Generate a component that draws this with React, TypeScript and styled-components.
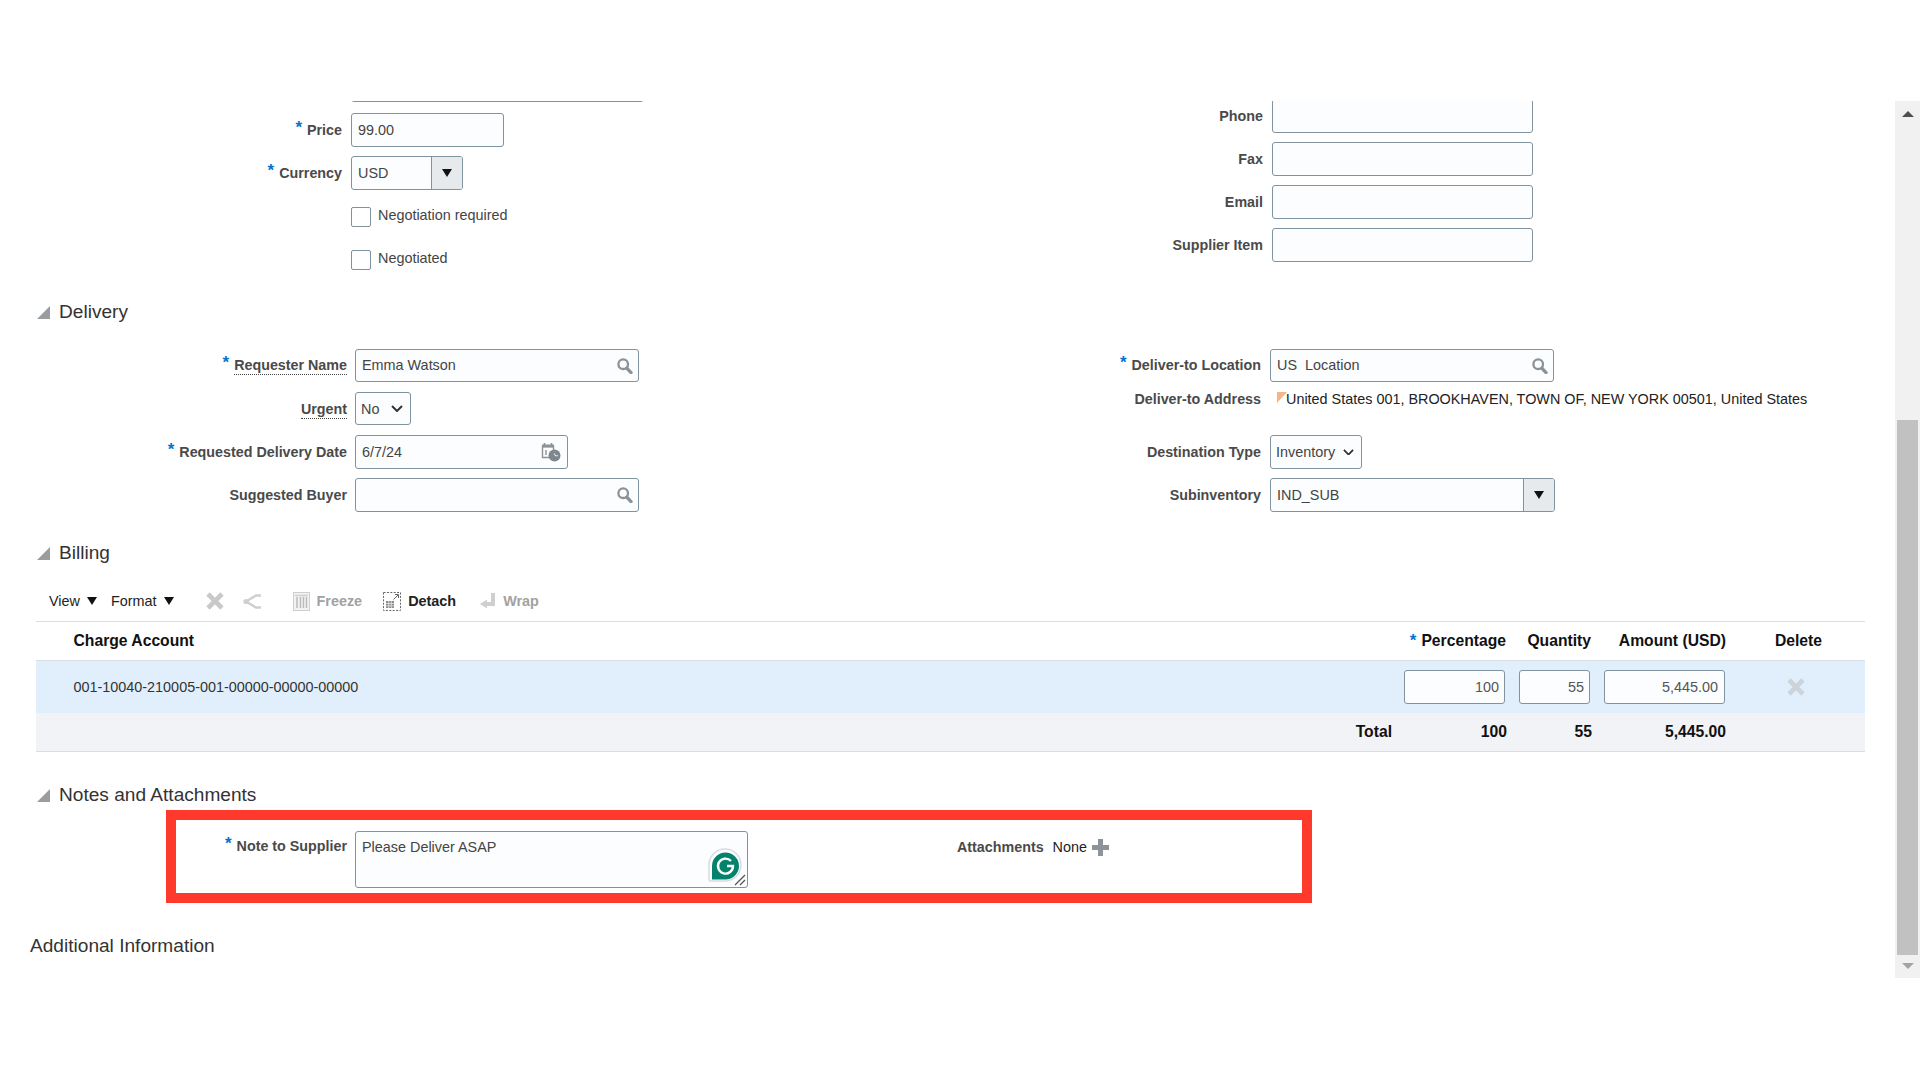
import * as React from 'react';
import styled, { createGlobalStyle } from 'styled-components';

const GlobalStyle = createGlobalStyle`
  html, body {
    margin: 0;
    padding: 0;
    background: #fff;
  }
  body {
    font-family: "Liberation Sans", Arial, sans-serif;
    font-size: 14.4px;
    color: #333;
  }
`;

const Page = styled.div`
  height: 1080px;
  overflow: hidden;
  padding-top: 101px;
  box-sizing: border-box;
`;

const Viewport = styled.div`
  display: flex;
  height: 877px;
`;

const Content = styled.main`
  flex: 1;
  min-width: 0;
  overflow: hidden;
`;

const Scrollbar = styled.div`
  width: 25px;
  background: #f1f1f1;
  display: flex;
  flex-direction: column;
  align-items: center;
`;

const ScrollArrow = styled.div<{ $down?: boolean }>`
  width: 0;
  height: 0;
  border-left: 6px solid transparent;
  border-right: 6px solid transparent;
  ${p => (p.$down ? 'border-top: 6px solid #a3a3a3; margin-top: 8px;' : 'border-bottom: 6px solid #505050; margin-top: 10px;')}
`;

const ScrollThumb = styled.div`
  width: 21px;
  height: 535px;
  margin-top: 303px;
  background: #c1c1c1;
`;

const Columns = styled.div`
  display: grid;
  grid-template-columns: 1000px 1fr;
  align-items: start;
`;

const FormGrid = styled.div<{ $label: number; $gap?: number; $top?: number }>`
  display: grid;
  grid-template-columns: ${p => p.$label}px 1fr;
  column-gap: ${p => p.$gap ?? 9}px;
  row-gap: 9px;
  grid-auto-rows: 34px;
  align-items: center;
  margin-top: ${p => p.$top ?? 0}px;
`;

const Label = styled.label<{ $start?: boolean; $up?: boolean }>`
  font-size: 14.3px;
  font-weight: 700;
  color: #4a4a4a;
  text-align: right;
  line-height: 15px;
  white-space: nowrap;
  ${p => p.$start && 'align-self: start;'}
  ${p => p.$up && 'padding-bottom: 2px;'}
`;

const Star = styled.span`
  color: #0572ce;
  font-size: 17px;
  line-height: 10px;
  vertical-align: 2px;
  margin-right: 5px;
`;

const Dotted = styled.span`
  border-bottom: 1px dotted #444;
  padding-bottom: 1px;
`;

const Field = styled.div<{ $width: number; $height?: number; $tight?: boolean }>`
  width: ${p => p.$width}px;
  height: ${p => p.$height ?? 34}px;
  box-sizing: border-box;
  display: flex;
  align-items: center;
  justify-self: start;
  align-self: start;
  border: 1px solid #80939f;
  border-radius: 3px;
  background: #fcfdfe;
  color: #444;
  padding-left: ${p => (p.$tight ? 5 : 6)}px;
  position: relative;
  white-space: pre;
  overflow: hidden;
`;

const FieldText = styled.span<{ $up?: boolean }>`
  flex: 1;
  ${p => p.$up && 'padding-bottom: 1px;'}
`;

const FieldIcon = styled.span<{ $right?: number }>`
  display: flex;
  margin-right: ${p => p.$right ?? 5}px;
`;

const DropButton = styled.span`
  width: 31px;
  height: 100%;
  flex: none;
  display: flex;
  align-items: center;
  justify-content: center;
  background: #e7eaed;
  border-left: 1px solid #80939f;
  box-sizing: border-box;
`;

const DownTriangle = styled.span`
  width: 0;
  height: 0;
  flex: none;
  border-left: 5.5px solid transparent;
  border-right: 5.5px solid transparent;
  border-top: 8px solid #111;
`;

const CheckRow = styled.div`
  display: flex;
  align-items: center;
  gap: 7px;
  padding-top: 1px;
`;

const CheckBox = styled.span`
  width: 20px;
  height: 20px;
  box-sizing: border-box;
  border: 1px solid #80939f;
  border-radius: 2px;
  background: #fff;
`;

const CheckText = styled.span`
  color: #444;
  padding-bottom: 3px;
`;

const AddressValue = styled.div`
  align-self: start;
  line-height: 15px;
  color: #222;
  padding-left: 16px;
  position: relative;
  white-space: nowrap;
`;

const NoteFlag = styled.span`
  position: absolute;
  left: 7px;
  top: 0;
  width: 0;
  height: 0;
  border-top: 11px solid #f7b48a;
  border-right: 10px solid transparent;
`;

const SectionHeader = styled.h2<{ $top: number }>`
  display: flex;
  align-items: center;
  gap: 9px;
  height: 24px;
  margin: ${p => p.$top}px 0 0 37px;
  font-size: 19.1px;
  font-weight: 400;
  color: #333;
`;

const Disclosure = styled.span`
  width: 0;
  height: 0;
  border-bottom: 13px solid #9a9da0;
  border-left: 13px solid transparent;
`;

const PlainHeader = styled.h2`
  height: 24px;
  line-height: 24px;
  margin: 31px 0 0 30px;
  font-size: 19.1px;
  font-weight: 400;
  color: #333;
`;

const Toolbar = styled.div`
  display: flex;
  align-items: center;
  height: 41px;
  margin: 16px 30px 0 36px;
  padding-left: 13px;
  box-sizing: border-box;
  border-bottom: 1px solid #d6dfe6;
`;

const MenuItem = styled.span<{ $left?: number }>`
  display: flex;
  align-items: center;
  gap: 7px;
  color: #222;
  margin-left: ${p => p.$left ?? 0}px;
`;

const ToolButton = styled.span<{ $left: number; $disabled?: boolean }>`
  display: flex;
  align-items: center;
  gap: 7px;
  font-weight: 700;
  color: ${p => (p.$disabled ? '#a2a2a2' : '#222')};
  margin-left: ${p => p.$left}px;
`;

const Table = styled.div`
  margin: 0 30px 0 36px;
  display: grid;
  grid-template-columns: 1362px 114px 85px 135px 1fr;
`;

const HeadCell = styled.div<{ $center?: boolean }>`
  height: 38px;
  display: flex;
  align-items: center;
  justify-content: ${p => (p.$center ? 'center' : 'flex-end')};
  padding-right: ${p => (p.$center ? 0 : 6)}px;
  font-size: 15.7px;
  font-weight: 700;
  color: #111;
  border-bottom: 1px solid #d6dfe6;
`;

const AccountHead = styled(HeadCell)`
  justify-content: flex-start;
  padding-left: 37.5px;
`;

const DataCell = styled.div<{ $center?: boolean }>`
  height: 52px;
  display: flex;
  align-items: center;
  justify-content: ${p => (p.$center ? 'center' : 'flex-end')};
  padding-right: ${p => (p.$center ? 6 : 7)}px;
  background: #e1effd;
  color: #333;
`;

const AccountCell = styled(DataCell)`
  justify-content: flex-start;
  padding-left: 37.5px;
`;

const AmountBox = styled.div<{ $width: number; $pad?: number }>`
  width: ${p => p.$width}px;
  height: 34px;
  box-sizing: border-box;
  border: 1px solid #80939f;
  border-radius: 3px;
  background: #fcfdfe;
  color: #555;
  display: flex;
  align-items: center;
  justify-content: flex-end;
  padding-right: ${p => p.$pad ?? 5}px;
`;

const TotalCell = styled.div<{ $right?: number }>`
  height: 38px;
  display: flex;
  align-items: center;
  justify-content: flex-end;
  padding-right: ${p => p.$right ?? 5}px;
  background: #f1f3f7;
  border-bottom: 1px solid #d6dfe6;
  font-size: 15.7px;
  font-weight: 700;
  color: #111;
`;

const Callout = styled.section`
  display: flex;
  align-items: flex-start;
  box-sizing: border-box;
  width: 1146px;
  height: 93px;
  margin: 3px 0 0 166px;
  border: 10px solid #ff3a2d;
  padding-top: 11px;
`;

const NoteLabel = styled(Label)`
  width: 171px;
  flex: none;
  margin-top: 8px;
`;

const NoteArea = styled.div`
  width: 393px;
  height: 57px;
  flex: none;
  box-sizing: border-box;
  margin-left: 8px;
  padding: 8px 6px;
  line-height: 15px;
  border: 1px solid #80939f;
  border-radius: 3px;
  background: #fcfdfe;
  color: #444;
  position: relative;
`;

const GrammarlyBadge = styled.svg`
  position: absolute;
  right: 5px;
  bottom: 4px;
`;

const ResizeGrip = styled.svg`
  position: absolute;
  right: 1px;
  bottom: 1px;
`;

const Attachments = styled.div`
  display: flex;
  align-items: center;
  margin: 8px 0 0 209px;
  line-height: 15px;
`;

const AttachLabel = styled.span`
  font-size: 14.3px;
  font-weight: 700;
  color: #4a4a4a;
  margin-right: 9px;
`;

const AttachNone = styled.span`
  color: #222;
  margin-right: 5px;
`;

const SearchIcon = () => (
  <svg width="16" height="16" viewBox="0 0 16 16">
    <circle cx="6.2" cy="6.2" r="4.8" fill="none" stroke="#8b9298" strokeWidth="2.3" />
    <path d="M9.8 10.2 14 14.6" stroke="#8b9298" strokeWidth="3.4" strokeLinecap="round" />
  </svg>
);

const Chevron = ({ size }: { size: number }) => (
  <svg width={size} height={size / 2 + 1} viewBox="0 0 12 7">
    <path d="M1 1l5 5 5-5" fill="none" stroke="#333" strokeWidth="2" />
  </svg>
);

const CalendarIcon = () => (
  <svg width="20" height="19" viewBox="0 0 20 19">
    <path d="M1.5 3.5h11v11h-11z" fill="#fcfdfe" stroke="#8b9298" strokeWidth="1.4" />
    <path d="M1 1.5h12v3H1z" fill="#8b9298" />
    <path d="M3.5 0v3M10.5 0v3" stroke="#8b9298" strokeWidth="1.6" />
    <path d="M5 7v5" stroke="#8b9298" strokeWidth="1.4" />
    <circle cx="13.5" cy="12.5" r="6" fill="#7f868c" />
    <path d="M13 10.5l1.5 2.2h2.5" fill="none" stroke="#e5e7e9" strokeWidth="1.1" />
  </svg>
);

const DeleteX = ({ color = '#c9c9c9' }: { color?: string }) => (
  <svg width="18" height="18" viewBox="0 0 18 18">
    <path d="M2 2l14 14M16 2 2 16" stroke={color} strokeWidth="4.6" />
  </svg>
);

const ShareIcon = () => (
  <svg width="19" height="17" viewBox="0 0 19 17">
    <path d="M18 2.5H13L3 8.5l10 6h5" fill="none" stroke="#cfcfcf" strokeWidth="2.4" />
    <circle cx="3" cy="8.5" r="2.6" fill="#cfcfcf" />
  </svg>
);

const FreezeIcon = () => (
  <svg width="17" height="19" viewBox="0 0 17 19">
    <rect x=".5" y=".5" width="16" height="18" fill="#f2f2f2" stroke="#cfcfcf" />
    <path d="M2 3.5h13" stroke="#cfcfcf" strokeWidth="1.5" />
    <path d="M4 5v11M7.5 5v11M10.5 5v11M13.5 5v11" stroke="#b9b9b9" strokeWidth="1.4" />
  </svg>
);

const DetachIcon = () => (
  <svg width="18" height="19" viewBox="0 0 18 19">
    <rect x=".5" y=".5" width="17" height="18" fill="none" stroke="#666" strokeDasharray="2 1.4" />
    <path d="M10.5 7.5 15 3M12 2.5h3.5V6" fill="none" stroke="#666" />
    <path d="M3 9h8v7H3z" fill="#8e8e8e" />
    <path d="M3 11.5h8M3 13.8h8M5.7 9v7M8.3 9v7" stroke="#eee" strokeWidth=".7" />
  </svg>
);

const WrapIcon = () => (
  <svg width="16" height="18" viewBox="0 0 16 18">
    <path d="M13 1v11H6" fill="none" stroke="#cfcfcf" strokeWidth="4" />
    <path d="M7 7.5v9L0 12z" fill="#cfcfcf" />
  </svg>
);

const PlusIcon = () => (
  <svg width="17" height="17" viewBox="0 0 17 17">
    <path d="M6 0h5v6h6v5h-6v6H6v-6H0V6h6z" fill="#8d9399" />
  </svg>
);

const Required = () => <Star>*</Star>;

const Lookup = ({ value, width, height }: { value?: string; width: number; height?: number }) => (
  <Field $width={width} $height={height}>
    <FieldText $up={height === 33}>{value}</FieldText>
    <FieldIcon>
      <SearchIcon />
    </FieldIcon>
  </Field>
);

const Combo = ({ value, width, height }: { value?: string; width: number; height?: number }) => (
  <Field $width={width} $height={height}>
    <FieldText>{value}</FieldText>
    <DropButton>
      <DownTriangle />
    </DropButton>
  </Field>
);

const Choice = ({ value, width, height, chevron }: { value: string; width: number; height?: number; chevron: number }) => (
  <Field $width={width} $height={height} $tight>
    <FieldText>{value}</FieldText>
    <FieldIcon $right={7}>
      <Chevron size={chevron} />
    </FieldIcon>
  </Field>
);

export default function App() {
  return (
    <Page>
      <GlobalStyle />
      <Viewport>
        <Content>
          <Columns>
            <FormGrid $label={342} $top={-31}>
              <span />
              <Combo width={293} height={32} />
              <Label>
                <Required />
                Price
              </Label>
              <Field $width={153}>99.00</Field>
              <Label>
                <Required />
                Currency
              </Label>
              <Combo value="USD" width={112} />
              <span />
              <CheckRow>
                <CheckBox />
                <CheckText>Negotiation required</CheckText>
              </CheckRow>
              <span />
              <CheckRow>
                <CheckBox />
                <CheckText>Negotiated</CheckText>
              </CheckRow>
            </FormGrid>
            <FormGrid $label={263} $top={-2}>
              <Label>Phone</Label>
              <Field $width={261} />
              <Label>Fax</Label>
              <Field $width={261} />
              <Label>Email</Label>
              <Field $width={261} />
              <Label>Supplier Item</Label>
              <Field $width={261} />
            </FormGrid>
          </Columns>

          <SectionHeader $top={24}>
            <Disclosure />
            Delivery
          </SectionHeader>
          <Columns>
            <FormGrid $label={347} $gap={8} $top={25}>
              <Label $up>
                <Required />
                <Dotted>Requester Name</Dotted>
              </Label>
              <Lookup value="Emma Watson" width={284} height={33} />
              <Label>
                <Dotted>Urgent</Dotted>
              </Label>
              <Choice value="No" width={56} height={33} chevron={12} />
              <Label>
                <Required />
                Requested Delivery Date
              </Label>
              <Field $width={213}>
                <FieldText>6/7/24</FieldText>
                <FieldIcon $right={6}>
                  <CalendarIcon />
                </FieldIcon>
              </Field>
              <Label>Suggested Buyer</Label>
              <Lookup width={284} />
            </FormGrid>
            <FormGrid $label={261} $top={25}>
              <Label $up>
                <Required />
                Deliver-to Location
              </Label>
              <Lookup value="US  Location" width={284} height={33} />
              <Label $start>Deliver-to Address</Label>
              <AddressValue>
                <NoteFlag />
                United States 001, BROOKHAVEN, TOWN OF, NEW YORK 00501, United States
              </AddressValue>
              <Label>Destination Type</Label>
              <Choice value="Inventory" width={92} chevron={11} />
              <Label>Subinventory</Label>
              <Combo value="IND_SUB" width={285} />
            </FormGrid>
          </Columns>

          <SectionHeader $top={29}>
            <Disclosure />
            Billing
          </SectionHeader>
          <Toolbar>
            <MenuItem>
              View <DownTriangle />
            </MenuItem>
            <MenuItem $left={14}>
              Format <DownTriangle />
            </MenuItem>
            <ToolButton $left={32} $disabled>
              <DeleteX />
            </ToolButton>
            <ToolButton $left={19} $disabled>
              <ShareIcon />
            </ToolButton>
            <ToolButton $left={31} $disabled>
              <FreezeIcon />
              Freeze
            </ToolButton>
            <ToolButton $left={21}>
              <DetachIcon />
              Detach
            </ToolButton>
            <ToolButton $left={24} $disabled>
              <WrapIcon />
              Wrap
            </ToolButton>
          </Toolbar>
          <Table>
            <AccountHead>Charge Account</AccountHead>
            <HeadCell>
              <Required />
              Percentage
            </HeadCell>
            <HeadCell>Quantity</HeadCell>
            <HeadCell>Amount (USD)</HeadCell>
            <HeadCell $center>Delete</HeadCell>

            <AccountCell>001-10040-210005-001-00000-00000-00000</AccountCell>
            <DataCell>
              <AmountBox $width={101}>100</AmountBox>
            </DataCell>
            <DataCell>
              <AmountBox $width={71}>55</AmountBox>
            </DataCell>
            <DataCell>
              <AmountBox $width={121} $pad={6}>
                5,445.00
              </AmountBox>
            </DataCell>
            <DataCell $center>
              <DeleteX color="#cdd3d8" />
            </DataCell>

            <TotalCell $right={6}>Total</TotalCell>
            <TotalCell>100</TotalCell>
            <TotalCell>55</TotalCell>
            <TotalCell $right={6}>5,445.00</TotalCell>
            <TotalCell />
          </Table>

          <SectionHeader $top={31}>
            <Disclosure />
            Notes and Attachments
          </SectionHeader>
          <Callout>
            <NoteLabel>
              <Required />
              Note to Supplier
            </NoteLabel>
            <NoteArea>
              Please Deliver ASAP
              <GrammarlyBadge width="34" height="35" viewBox="0 0 34 35">
                <path d="M17 1a16 16 0 0 1 0 32H3a2 2 0 0 1-2-2V17A16 16 0 0 1 17 1z" fill="#fff" stroke="#d5dbe6" strokeWidth="1.5" />
                <path d="M17.5 4.5a13.5 13.5 0 0 1 0 27H4V18A13.5 13.5 0 0 1 17.5 4.5z" fill="#04826c" />
                <path d="M23 13a7.5 7.5 0 1 0 2 5h-6" fill="none" stroke="#fff" strokeWidth="2.4" />
              </GrammarlyBadge>
              <ResizeGrip width="12" height="12" viewBox="0 0 12 12">
                <path d="M1 11 11 1M6 11l5-5" stroke="#555" strokeWidth="1.3" />
              </ResizeGrip>
            </NoteArea>
            <Attachments>
              <AttachLabel>Attachments</AttachLabel>
              <AttachNone>None</AttachNone>
              <PlusIcon />
            </Attachments>
          </Callout>

          <PlainHeader>Additional Information</PlainHeader>
        </Content>
        <Scrollbar>
          <ScrollArrow />
          <ScrollThumb />
          <ScrollArrow $down />
        </Scrollbar>
      </Viewport>
    </Page>
  );
}
